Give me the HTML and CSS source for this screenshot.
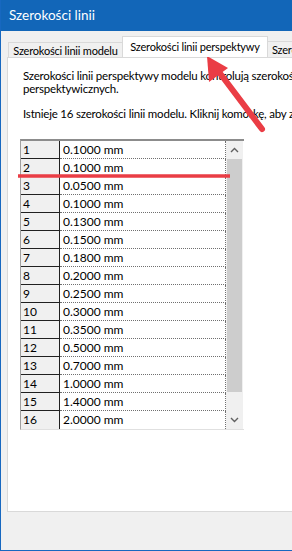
FILE: index.html
```html
<!DOCTYPE html>
<html lang="pl">
<head>
  <meta charset="UTF-8">
  <title>Szerokości linii</title>
  <link rel="stylesheet" href="styles.css">
</head>
<body>
  <div class="window">
    <div class="titlebar">Szerokości linii</div>

    <div class="tabs">
      <div class="tab tab-model">Szerokości linii modelu</div>
      <div class="tab tab-persp active">Szerokości linii perspektywy</div>
      <div class="tab">Szerokości linii</div>
    </div>

    <div class="panel">
      <p class="intro">Szerokości linii perspektywy modelu kontrolują szerokość linii w widokach<br>perspektywicznych.</p>
      <p class="intro">Istnieje 16 szerokości linii modelu. Kliknij komórkę, aby zmienić szerokość.</p>

      <div class="grid">
        <div class="rows">
          <div class="row"><span class="num">1</span><span class="val">0.1000 mm</span></div>
          <div class="row"><span class="num">2</span><span class="val">0.1000 mm</span></div>
          <div class="row"><span class="num">3</span><span class="val">0.0500 mm</span></div>
          <div class="row"><span class="num">4</span><span class="val">0.1000 mm</span></div>
          <div class="row"><span class="num">5</span><span class="val">0.1300 mm</span></div>
          <div class="row"><span class="num">6</span><span class="val">0.1500 mm</span></div>
          <div class="row"><span class="num">7</span><span class="val">0.1800 mm</span></div>
          <div class="row"><span class="num">8</span><span class="val">0.2000 mm</span></div>
          <div class="row"><span class="num">9</span><span class="val">0.2500 mm</span></div>
          <div class="row"><span class="num">10</span><span class="val">0.3000 mm</span></div>
          <div class="row"><span class="num">11</span><span class="val">0.3500 mm</span></div>
          <div class="row"><span class="num">12</span><span class="val">0.5000 mm</span></div>
          <div class="row"><span class="num">13</span><span class="val">0.7000 mm</span></div>
          <div class="row"><span class="num">14</span><span class="val">1.0000 mm</span></div>
          <div class="row"><span class="num">15</span><span class="val">1.4000 mm</span></div>
          <div class="row"><span class="num">16</span><span class="val">2.0000 mm</span></div>
        </div>
        <div class="scrollbar">
          <div class="sb-btn">
            <svg width="9" height="6" viewBox="0 0 9 6"><path d="M1 5 L4.5 1.5 L8 5" fill="none" stroke="#606060" stroke-width="1.4"/></svg>
          </div>
          <div class="sb-track"><div class="sb-thumb"></div></div>
          <div class="sb-btn">
            <svg width="9" height="6" viewBox="0 0 9 6"><path d="M1 1 L4.5 4.5 L8 1" fill="none" stroke="#606060" stroke-width="1.4"/></svg>
          </div>
        </div>
      </div>
    </div>

    <!-- screenshot annotations -->
    <svg class="marks" width="292" height="551" viewBox="0 0 292 551">
      <line x1="18" y1="176" x2="230" y2="176" stroke="#ea3d45" stroke-width="3.5"/>
      <line x1="262" y1="129" x2="219" y2="72" stroke="#ea3d45" stroke-width="6" stroke-linecap="round"/>
      <polygon points="207,56 209,82 228,68" fill="#ea3d45"/>
    </svg>
  </div>
</body>
</html>
```

FILE: styles.css
```css
body {
  margin: 0;
  font-family: Lato, "Liberation Sans", sans-serif;
  font-size: 12px;
  color: #000;
}

.window {
  position: relative;
  width: 291px;
  height: 550px;
  background: #f0f0f0;
  border-left: 1px solid #1768c0;
  border-bottom: 1px solid #1768c0;
  overflow: hidden;
}

.titlebar {
  height: 31px;
  line-height: 31px;
  padding-left: 8px;
  background: #1266b8;
  color: #fff;
  font-size: 13.5px;
}

.tabs {
  display: flex;
  align-items: flex-end;
  height: 21px;
  margin-top: 5px;
  padding-left: 7px;
  white-space: nowrap;
}

.tab {
  height: 15px;
  line-height: 16px;
  padding: 0 4px;
  border: 1px solid #d9d9d9;
  border-bottom: none;
  background: #f0f0f0;
  font-size: 11px;
  letter-spacing: -0.2px;
  text-align: center;
  flex-shrink: 0;
}

.tab-model {
  width: 115px;
  box-sizing: border-box;
}

.tab-persp {
  width: 146px;
  box-sizing: border-box;
}

.tab.active {
  height: 21px;
  line-height: 19px;
  background: #fff;
  margin: 0 -1px 0 -1px;
  position: relative;
  z-index: 1;
}

.panel {
  margin-left: 6px;
  height: 455px;
  background: #fff;
  border-left: 1px solid #d9d9d9;
  border-top: 1px solid #d9d9d9;
  border-bottom: 1px solid #d9d9d9;
  padding: 11px 0 0 12px;
  box-sizing: border-box;
  white-space: nowrap;
  overflow: hidden;
}

.intro {
  margin: 0 0 12px 3px;
  line-height: 13px;
  font-size: 11.5px;
  letter-spacing: -0.2px;
}

.grid {
  display: flex;
  width: 223px;
  margin-top: 19px;
  border-top: 2px solid #8c8c8c;
  border-left: 1px solid #a0a0a0;
  border-bottom: 1px solid #e0e0e0;
}

.rows {
  display: flex;
  flex-direction: column;
  width: 205px;
}

.row {
  display: flex;
  height: 18px;
}

.num {
  width: 36px;
  padding-left: 2px;
  background: #f0f0f0;
  border-right: 1px solid #202020;
  border-bottom: 1px solid #202020;
  line-height: 18px;
}

.val {
  flex: 1;
  padding-left: 3px;
  border-bottom: 1px dotted #707070;
  border-right: 1px dotted #707070;
  line-height: 18px;
}

.row:last-child .num,
.row:last-child .val {
  border-bottom: none;
}

.scrollbar {
  display: flex;
  flex-direction: column;
  width: 17px;
  background: #f0f0f0;
}

.sb-btn {
  height: 18px;
  display: flex;
  align-items: center;
  justify-content: center;
}

.sb-track {
  flex: 1;
}

.sb-thumb {
  height: 233px;
  margin: 0 1px;
  background: #cdcdcd;
}

.marks {
  position: absolute;
  left: -1px;
  top: 0;
}
```
